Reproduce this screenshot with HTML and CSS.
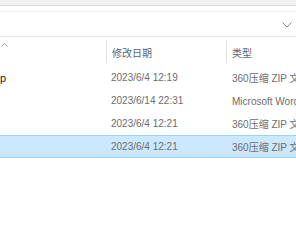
FILE: index.html
```html
<!DOCTYPE html>
<html>
<head>
<meta charset="utf-8">
<link rel="stylesheet" href="styles.css">
</head>
<body>
<div class="win">
  <div class="topbar"></div>
  <div class="strip"></div>
  <div class="addr">
    <svg class="chev" width="10" height="6" viewBox="0 0 10 6"><path d="M0.5 0.5 L5 5 L9.5 0.5" fill="none" stroke="#8a8a8a" stroke-width="1"/></svg>
  </div>
  <div class="header">
    <div class="hcell name"><svg class="caret" width="7" height="4" viewBox="0 0 7 4"><path d="M0.5 3.5 L3.5 0.5 L6.5 3.5" fill="none" stroke="#a0a0a0" stroke-width="1"/></svg></div>
    <div class="hcell sep">修改日期</div>
    <div class="hcell sep">类型</div>
  </div>
  <div class="rows">
    <div class="row"><div class="cell name fname">p</div><div class="cell date">2023/6/4 12:19</div><div class="cell type">360压缩 ZIP 文件</div></div>
    <div class="row"><div class="cell name"></div><div class="cell date">2023/6/14 22:31</div><div class="cell type">Microsoft Word 文档</div></div>
    <div class="row"><div class="cell name"></div><div class="cell date">2023/6/4 12:21</div><div class="cell type">360压缩 ZIP 文件</div></div>
    <div class="row sel"><div class="cell name"></div><div class="cell date">2023/6/4 12:21</div><div class="cell type">360压缩 ZIP 文件</div></div>
  </div>
</div>
</body>
</html>
```
FILE: styles.css
```css
html, body { margin: 0; padding: 0; background: #fff; }
body { width: 296px; height: 235px; overflow: hidden; font-family: "Liberation Sans", "Noto Sans CJK SC", sans-serif; font-size: 10px; }
.win { width: 296px; }
.topbar { height: 5px; background: #f2f2f2; border-bottom: 1px solid #d9d9d9; }
.strip { height: 5px; border-bottom: 1px solid #f0f0f0; }
.addr { height: 24px; border-bottom: 1px solid #e5e5e5; display: flex; align-items: center; justify-content: flex-end; padding-right: 4px; }
.chev { display: block; margin-top: 1px; }
.header { display: grid; grid-template-columns: 106px 120px 1fr; height: 26px; white-space: nowrap; overflow: hidden; }
.hcell { display: flex; align-items: center; color: #5a6675; padding-left: 5px; position: relative; }
.hcell.name { padding-left: 1px; align-items: flex-start; padding-top: 6px; }
.caret { display: block; }
.hcell.sep { border-left: 1px solid #e5e5e5; margin-top: 3px; padding-top: 2px; }
.rows { padding-top: 3px; }
.row { display: grid; grid-template-columns: 106px 120px 1fr; height: 23px; align-items: center; white-space: nowrap; overflow: hidden; }
.cell { padding-left: 5px; overflow: hidden; color: #6d6d6d; }
.cell.name { padding-left: 0; }
.cell.type { padding-left: 6px; }
.fname { color: #1e1e1e; font-size: 11px; }
.row.sel { background: #cce8ff; box-shadow: inset 0 1px 0 #99d1ff, inset 0 -1px 0 #99d1ff; }
```
